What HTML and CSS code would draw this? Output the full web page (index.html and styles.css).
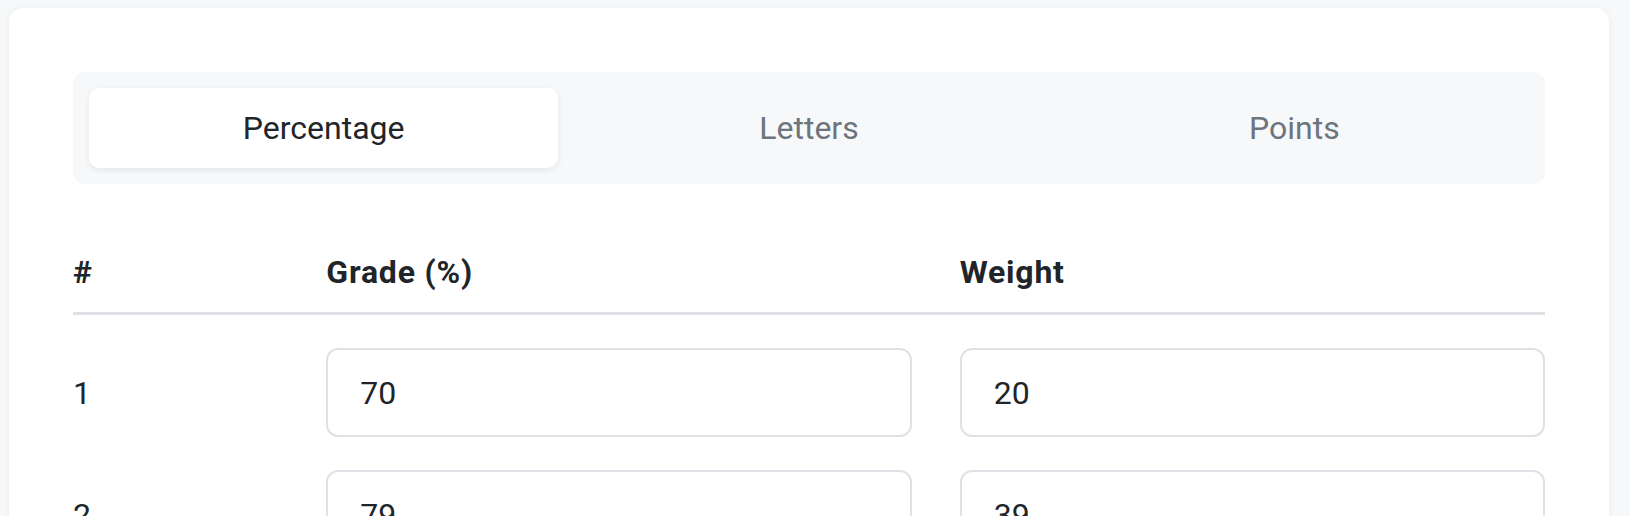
FILE: index.html
```html
<!DOCTYPE html>
<html lang="en">
<head>
<meta charset="utf-8">
<title>Grade calculator</title>
<link rel="stylesheet" href="styles.css">
</head>
<body>
<div class="page">
  <div class="card">
    <div class="tabs">
      <button class="tab active">Percentage</button>
      <button class="tab">Letters</button>
      <button class="tab">Points</button>
    </div>
    <div class="grid head">
      <div>#</div>
      <div>Grade (%)</div>
      <div>Weight</div>
    </div>
    <div class="grid row">
      <div class="num">1</div>
      <input class="field" type="text" value="70">
      <input class="field" type="text" value="20">
    </div>
    <div class="grid row">
      <div class="num">2</div>
      <input class="field" type="text" value="79">
      <input class="field" type="text" value="39">
    </div>
  </div>
</div>
</body>
</html>
```

FILE: styles.css
```css
html, body {
  margin: 0;
  padding: 0;
  background: #f7f8f9;
  overflow: hidden;
}
body {
  font-family: Roboto, "Liberation Sans", sans-serif;
  color: #212529;
}
.page {
  padding: 8px 21px 0 9px;
}
.card {
  background: #ffffff;
  border-radius: 14px;
  box-shadow: 0 0 6px rgba(0, 0, 0, 0.05);
  padding: 64px 64px 64px;
}
.tabs {
  display: grid;
  grid-template-columns: 1fr 1fr 1fr;
  gap: 16px;
  padding: 16px;
  background: #f7f8f9;
  border-radius: 12px;
}
.tab {
  height: 80px;
  border: 0;
  border-radius: 10px;
  background: transparent;
  font-family: inherit;
  font-size: 32px;
  color: #6c757d;
  padding: 0;
}
.tab.active {
  background: #ffffff;
  color: #212529;
  box-shadow: 0 2px 6px rgba(0, 0, 0, 0.08);
}
.grid {
  display: grid;
  grid-template-columns: calc((100% + 48px) / 6 - 48px) 1fr 1fr;
  column-gap: 48px;
}
.head {
  margin-top: 65px;
  padding-bottom: 17px;
  border-bottom: 3px solid #dee2e6;
  font-size: 32px;
  font-weight: 700;
  line-height: 46px;
  letter-spacing: 0.8px;
}
.row {
  margin-top: 33px;
  align-items: center;
}
.num {
  font-size: 32px;
  line-height: 46px;
}
.field {
  display: block;
  width: 100%;
  box-sizing: border-box;
  height: 89px;
  border: 2px solid #dee2e6;
  border-radius: 12px;
  padding: 0 32px;
  font-family: inherit;
  font-size: 32px;
  color: #212529;
  background: #ffffff;
  outline: none;
}
```
